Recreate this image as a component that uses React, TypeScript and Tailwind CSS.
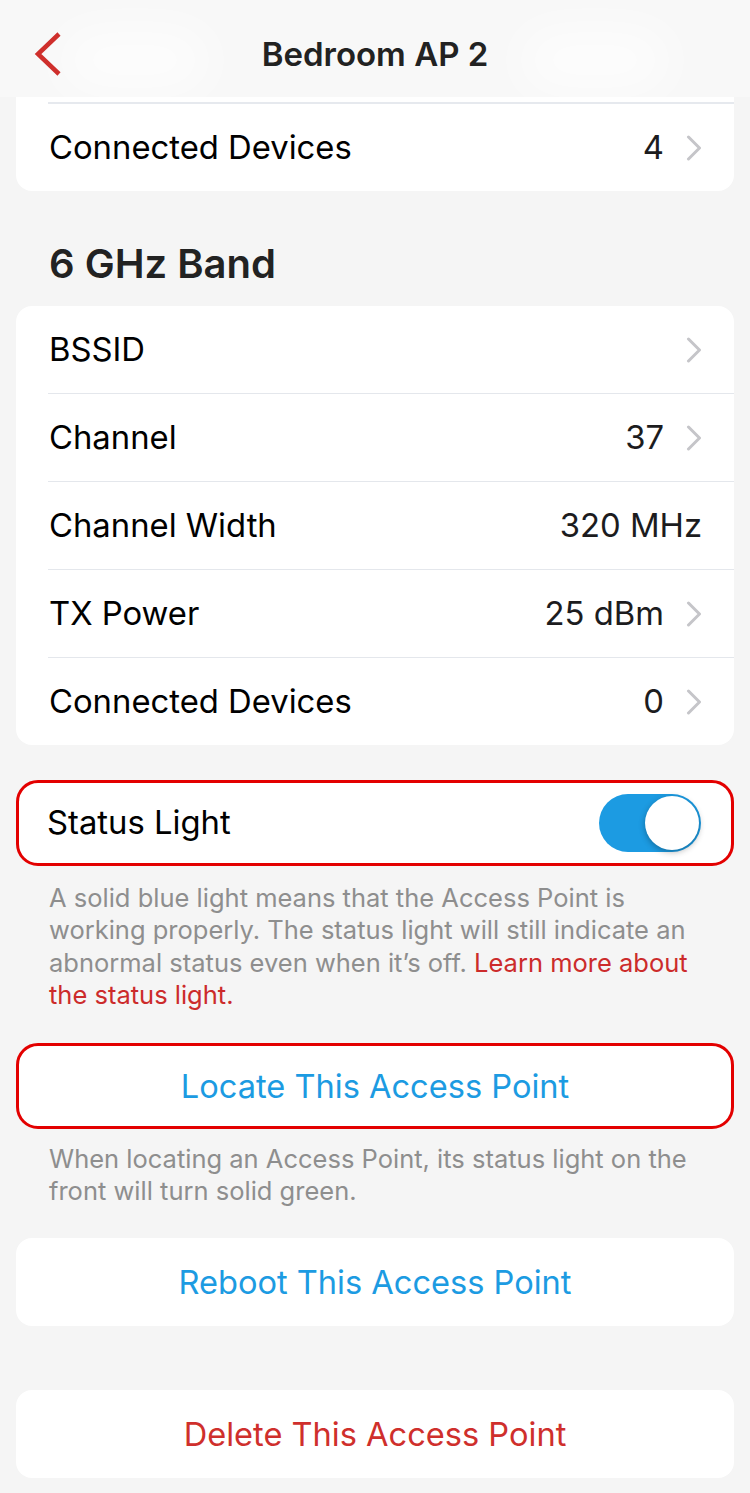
import React from 'react'

const font = { fontFamily: 'Inter, "Noto Sans", sans-serif' }

function Chevron() {
  return (
    <svg width="16" height="26" viewBox="0 0 16 26" className="ml-[22px] shrink-0">
      <path d="M2.5 2 L13.5 13 L2.5 24" fill="none" stroke="#c5c5c9" strokeWidth="3" strokeLinecap="round" strokeLinejoin="round" />
    </svg>
  )
}

type Row = { label: string; value?: string; chevron?: boolean }

function InfoRow({ row }: { row: Row }) {
  return (
    <div className="flex h-[87px] items-center pl-[33px] pr-[32px]">
      <span className="flex-1 text-[32.8px] text-black">{row.label}</span>
      {row.value && <span className="text-[32.8px] text-[#1c1c1e]">{row.value}</span>}
      {row.chevron && <Chevron />}
    </div>
  )
}

const band6: Row[] = [
  { label: 'BSSID', chevron: true },
  { label: 'Channel', value: '37', chevron: true },
  { label: 'Channel Width', value: '320 MHz' },
  { label: 'TX Power', value: '25 dBm', chevron: true },
  { label: 'Connected Devices', value: '0', chevron: true },
]

export default function App() {
  return (
    <div className="min-h-[1493px] w-[750px] bg-[#f5f5f5] pb-4" style={font}>
      <header className="relative flex h-[97px] items-center justify-center overflow-hidden bg-[#f8f8f8] pt-[12px]">
        <div className="absolute left-[60px] top-[30px] h-[60px] w-[150px] rounded-full bg-white/70 blur-xl" />
        <div className="absolute right-[80px] top-[30px] h-[60px] w-[150px] rounded-full bg-white/70 blur-xl" />
        <svg width="30" height="46" viewBox="0 0 30 46" className="absolute left-[33px] top-[31px]">
          <path d="M26 3 L5 23 L26 43" fill="none" stroke="#cf2f2c" strokeWidth="4.5" />
        </svg>
        <h1 className="relative text-[33px] font-semibold text-[#222]">Bedroom AP 2</h1>
      </header>

      <div className="mx-4 rounded-b-2xl bg-white pt-[5px]">
        <div className="ml-[32px] border-t-2 border-[#e6e9ee]" />
        <InfoRow row={{ label: 'Connected Devices', value: '4', chevron: true }} />
      </div>

      <h2 className="mt-[51px] mb-[20px] pl-[49px] text-[40px] font-semibold leading-[44px] text-[#222]">6 GHz Band</h2>

      <div className="mx-4 rounded-2xl bg-white">
        {band6.map((row, i) => (
          <div key={row.label}>
            {i > 0 && <div className="ml-[32px] border-t border-[#e4e7ec]" />}
            <InfoRow row={row} />
          </div>
        ))}
      </div>

      <div className="mx-4 mt-[35px] flex h-[86px] items-center rounded-[22px] border-[3px] border-[#e30000] bg-white pl-[28px] pr-[30px]">
        <span className="flex-1 text-[32.8px] text-black">Status Light</span>
        <div className="relative h-[58px] w-[102px] rounded-full bg-[#1c9be2]">
          <div className="absolute right-[2px] top-[2px] h-[54px] w-[54px] rounded-full bg-white shadow-[0_2px_6px_rgba(0,0,0,0.3)]" />
        </div>
      </div>

      <p className="mt-[16px] px-[49px] text-[25.5px] leading-[32.3px] text-[#8e8e8e]">
        A solid blue light means that the Access Point is working properly. The status light will still indicate an abnormal status even when it’s off.{' '}
        <span className="text-[#cc2b2b]">Learn more about the status light.</span>
      </p>

      <button className="mx-4 mt-[32px] flex h-[86px] w-[718px] items-center justify-center rounded-[22px] border-[3px] border-[#e30000] bg-white text-[32.6px] text-[#1c9be2]">
        Locate This Access Point
      </button>

      <p className="mt-[14px] px-[49px] text-[25.5px] leading-[32px] text-[#8e8e8e]">
        When locating an Access Point, its status light on the front will turn solid green.
      </p>

      <button className="mx-4 mt-[31px] flex h-[88px] w-[718px] items-center justify-center rounded-2xl bg-white text-[32.6px] text-[#1c9be2]">
        Reboot This Access Point
      </button>

      <button className="mx-4 mt-[64px] flex h-[88px] w-[718px] items-center justify-center rounded-2xl bg-white text-[32.6px] text-[#cf2f2c]">
        Delete This Access Point
      </button>
    </div>
  )
}
